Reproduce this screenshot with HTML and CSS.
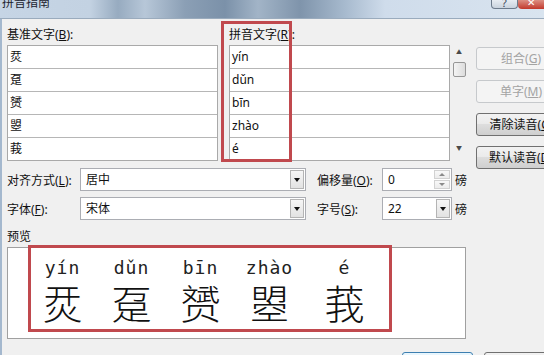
FILE: index.html
```html
<!DOCTYPE html>
<html lang="zh-CN">
<head>
    <meta charset="UTF-8">
    <meta name="viewport" content="width=device-width, initial-scale=1.0">
    <title>拼音指南</title>
    <link rel="stylesheet" href="styles.css">
</head>
<body>
    <div class="window">
        <div class="titlebar">
            <div class="title">拼音指南</div>
            <div class="caption-buttons">
                <div class="cap-help">?</div>
                <div class="cap-close">✕</div>
            </div>
        </div>

        <div class="dialog">
            <div class="top">
                <div class="list-area">
                    <div class="list-head">
                        <div>基准文字(<u>B</u>):</div>
                        <div>拼音文字(<u>R</u>):</div>
                    </div>
                    <div class="list">
                        <div class="col base">
                            <div class="cell">烎</div>
                            <div class="cell">趸</div>
                            <div class="cell">赟</div>
                            <div class="cell">曌</div>
                            <div class="cell">莪</div>
                        </div>
                        <div class="col pinyin">
                            <div class="cell">yín</div>
                            <div class="cell">dǔn</div>
                            <div class="cell">bīn</div>
                            <div class="cell">zhào</div>
                            <div class="cell">é</div>
                        </div>
                        <div class="scrollbar">
                            <div class="arrow">▲</div>
                            <div class="thumb"></div>
                            <div class="arrow down">▼</div>
                        </div>
                    </div>
                </div>
                <div class="side-buttons">
                    <button class="btn side" disabled>组合(<u>G</u>)</button>
                    <button class="btn side" disabled>单字(<u>M</u>)</button>
                    <button class="btn side">清除读音(<u>C</u>)</button>
                    <button class="btn side">默认读音(<u>D</u>)</button>
                </div>
            </div>

            <div class="options">
                <div class="opt-row">
                    <div class="opt-label">对齐方式(<u>L</u>):</div>
                    <div class="combo wide"><span>居中</span><div class="drop"></div></div>
                    <div class="opt-label mid">偏移量(<u>O</u>):</div>
                    <div class="combo narrow"><span>0</span>
                        <div class="spin-btns">
                            <div class="spin-up"></div>
                            <div class="spin-down"></div>
                        </div>
                    </div>
                    <div class="unit">磅</div>
                </div>
                <div class="opt-row">
                    <div class="opt-label">字体(<u>F</u>):</div>
                    <div class="combo wide"><span>宋体</span><div class="drop"></div></div>
                    <div class="opt-label mid">字号(<u>S</u>):</div>
                    <div class="combo narrow"><span>22</span><div class="drop"></div></div>
                    <div class="unit">磅</div>
                </div>
            </div>

            <div class="preview-label">预览</div>
            <div class="preview">
                <div class="ruby-line">
                    <div class="ruby"><span class="py">yín</span><span class="hz">烎</span></div>
                    <div class="ruby"><span class="py">dǔn</span><span class="hz">趸</span></div>
                    <div class="ruby"><span class="py">bīn</span><span class="hz">赟</span></div>
                    <div class="ruby"><span class="py">zhào</span><span class="hz">曌</span></div>
                    <div class="ruby last"><span class="py">é</span><span class="hz">莪</span></div>
                </div>
            </div>

            <div class="bottom-buttons">
                <button class="btn foot primary">确定</button>
                <button class="btn foot">取消</button>
            </div>
        </div>

        <!-- red annotation frames drawn over the dialog -->
        <div class="mark mark-pinyin"></div>
        <div class="mark mark-preview"></div>
    </div>
</body>
</html>
```

FILE: styles.css
```css
body {
    margin: 0;
    width: 544px;
    height: 355px;
    overflow: hidden;
    background-color: #f0f0f0;
    font-family: "Noto Sans", "Noto Sans CJK SC", sans-serif;
    font-size: 12px;
    color: #111;
}

u {
    text-underline-offset: 1px;
}

.window {
    position: relative;
    height: 355px;
}

/* title bar */
.titlebar {
    height: 18px;
    border-bottom: 1px solid #9aabbd;
    display: flex;
    justify-content: space-between;
    overflow: hidden;
    background: linear-gradient(90deg, #c6d5e5 0, #c3d2e2 90px, #97abc0 118px, #b7c7d8 145px, #8b9fb5 185px, #7b91a9 225px, #a2b4c7 258px, #7f94ab 300px, #a7bace 345px, #cfdceb 385px, #d9e4ef 544px);
}

.title {
    padding-left: 2px;
    margin-top: -4px;
    line-height: 14px;
    font-size: 12px;
    color: #1c2430;
}

.caption-buttons {
    display: flex;
    align-items: flex-start;
}

.cap-help {
    width: 27px;
    height: 9px;
    box-sizing: border-box;
    border: 1px solid #6d7b8c;
    border-top: none;
    border-radius: 0 0 4px 4px;
    background: linear-gradient(#e7ecf2, #c9d3de);
    text-align: center;
    font-size: 11px;
    line-height: 6px;
    color: #3a4656;
    overflow: hidden;
}

.cap-close {
    width: 26px;
    height: 9px;
    border-bottom-left-radius: 4px;
    background: linear-gradient(#dc8f83, #c2392c);
    text-align: center;
    font-size: 10px;
    line-height: 5px;
    color: #fff;
    overflow: hidden;
}

/* dialog body */
.dialog {
    height: 336px;
    border-left: 2px solid #a4b8ce;
    padding-left: 5px;
}

.top {
    display: flex;
    height: 142px;
}

.list-area {
    width: 459px;
    flex: none;
}

.list-head {
    display: grid;
    grid-template-columns: 222px 1fr;
    padding-top: 8px;
    height: 16px;
    line-height: 16px;
    margin-bottom: 2px;
}

.list {
    display: flex;
    height: 116px;
}

.col {
    display: flex;
    flex-direction: column;
    gap: 1px;
    box-sizing: border-box;
    border: 1px solid #a9a9a9;
    background-color: #b6b6b6;
}

.col.base {
    width: 211px;
}

.col.pinyin {
    width: 221px;
    margin-left: 11px;
}

.cell {
    height: 22px;
    line-height: 22px;
    padding-left: 2px;
    background-color: #fff;
}

.scrollbar {
    width: 14px;
    margin-left: 2px;
    display: flex;
    flex-direction: column;
    align-items: center;
}

.arrow {
    height: 14px;
    line-height: 14px;
    font-size: 6px;
    color: #4a4a4a;
}

.arrow.down {
    margin-top: auto;
    margin-bottom: 6px;
}

.thumb {
    align-self: stretch;
    margin-left: 1px;
    margin-top: 3px;
    height: 15px;
    box-sizing: border-box;
    border: 1px solid #979797;
    border-radius: 2px;
    background: linear-gradient(90deg, #f4f4f4, #dcdcdc);
}

.side-buttons {
    flex: none;
    margin-left: 10px;
    padding-top: 28px;
    display: flex;
    flex-direction: column;
    gap: 10px;
}

.btn {
    flex: none;
    height: 23px;
    box-sizing: border-box;
    padding: 0;
    font-family: inherit;
    font-size: 12px;
    line-height: 20px;
    white-space: nowrap;
    color: #111;
    border: 1px solid #707070;
    border-radius: 3px;
    background: linear-gradient(#f2f2f2, #ebebeb 45%, #dddddd 50%, #cfcfcf);
}

.btn:disabled {
    color: #a3a3a3;
    border-color: #c6c9cc;
    background: #f4f4f4;
}

.btn.side {
    width: 90px;
}

.btn.foot {
    width: 71px;
}

.btn.primary {
    border-color: #3c7fb1;
    background: linear-gradient(#eaf6fd, #d9f0fc 50%, #bee6fd 50%, #a7d9f5);
}

/* alignment / font rows */
.options {
    margin-top: 7px;
    display: flex;
    flex-direction: column;
    gap: 6px;
}

.opt-row {
    display: flex;
    align-items: center;
    height: 23px;
}

.opt-label {
    width: 73px;
    flex: none;
}

.opt-label.mid {
    width: 65px;
    margin-left: 11px;
}

.combo {
    height: 23px;
    box-sizing: border-box;
    border: 1px solid #abadb3;
    background-color: #fff;
    display: flex;
    justify-content: space-between;
}

.combo span {
    padding-left: 5px;
    line-height: 21px;
}

.combo.wide {
    width: 226px;
}

.combo.narrow {
    width: 70px;
}

.drop {
    width: 14px;
    margin: 1px;
    box-sizing: border-box;
    border: 1px solid #b4b4b4;
    background: linear-gradient(#f6f6f6, #e2e2e2);
    display: flex;
    align-items: center;
    justify-content: center;
}

.drop::after {
    content: "";
    border-left: 3.5px solid transparent;
    border-right: 3.5px solid transparent;
    border-top: 4px solid #111;
}

.spin-btns {
    width: 16px;
    margin: 1px;
    display: flex;
    flex-direction: column;
    gap: 1px;
}

.spin-up,
.spin-down {
    flex: 1;
    border: 1px solid #d2d2d2;
    background: linear-gradient(#f8f8f8, #ececec);
    display: flex;
    align-items: center;
    justify-content: center;
}

.spin-up::after {
    content: "";
    border-left: 3px solid transparent;
    border-right: 3px solid transparent;
    border-bottom: 3px solid #8a8a8a;
}

.spin-down::after {
    content: "";
    border-left: 3px solid transparent;
    border-right: 3px solid transparent;
    border-top: 3px solid #8a8a8a;
}

.unit {
    margin-left: 3px;
}

/* preview */
.preview-label {
    margin-top: 9px;
    height: 16px;
    line-height: 16px;
    margin-bottom: 2px;
}

.preview {
    width: 459px;
    height: 92px;
    box-sizing: border-box;
    border: 1px solid #a0a0a0;
    background-color: #fff;
    padding: 10px 0 0 20px;
}

.ruby-line {
    display: flex;
}

.ruby {
    width: 69px;
    display: flex;
    flex-direction: column;
    align-items: center;
}

.ruby.last {
    margin-left: 6px;
}

.py {
    font-family: "DejaVu Sans Mono", monospace;
    font-size: 18px;
    line-height: 20px;
    letter-spacing: 1px;
    color: #222;
}

.hz {
    font-family: "Noto Sans CJK SC", sans-serif;
    font-size: 40px;
    font-weight: 300;
    line-height: 42px;
    margin-top: 3px;
    color: #111;
}

.bottom-buttons {
    margin-top: 13px;
    padding-left: 395px;
    display: flex;
    gap: 11px;
}

/* red annotation frames */
.mark {
    position: absolute;
    box-sizing: border-box;
    border: 3px solid #c0494e;
}

.mark-pinyin {
    left: 221px;
    top: 21px;
    width: 71px;
    height: 141px;
}

.mark-preview {
    left: 28px;
    top: 245px;
    width: 364px;
    height: 87px;
}
```
